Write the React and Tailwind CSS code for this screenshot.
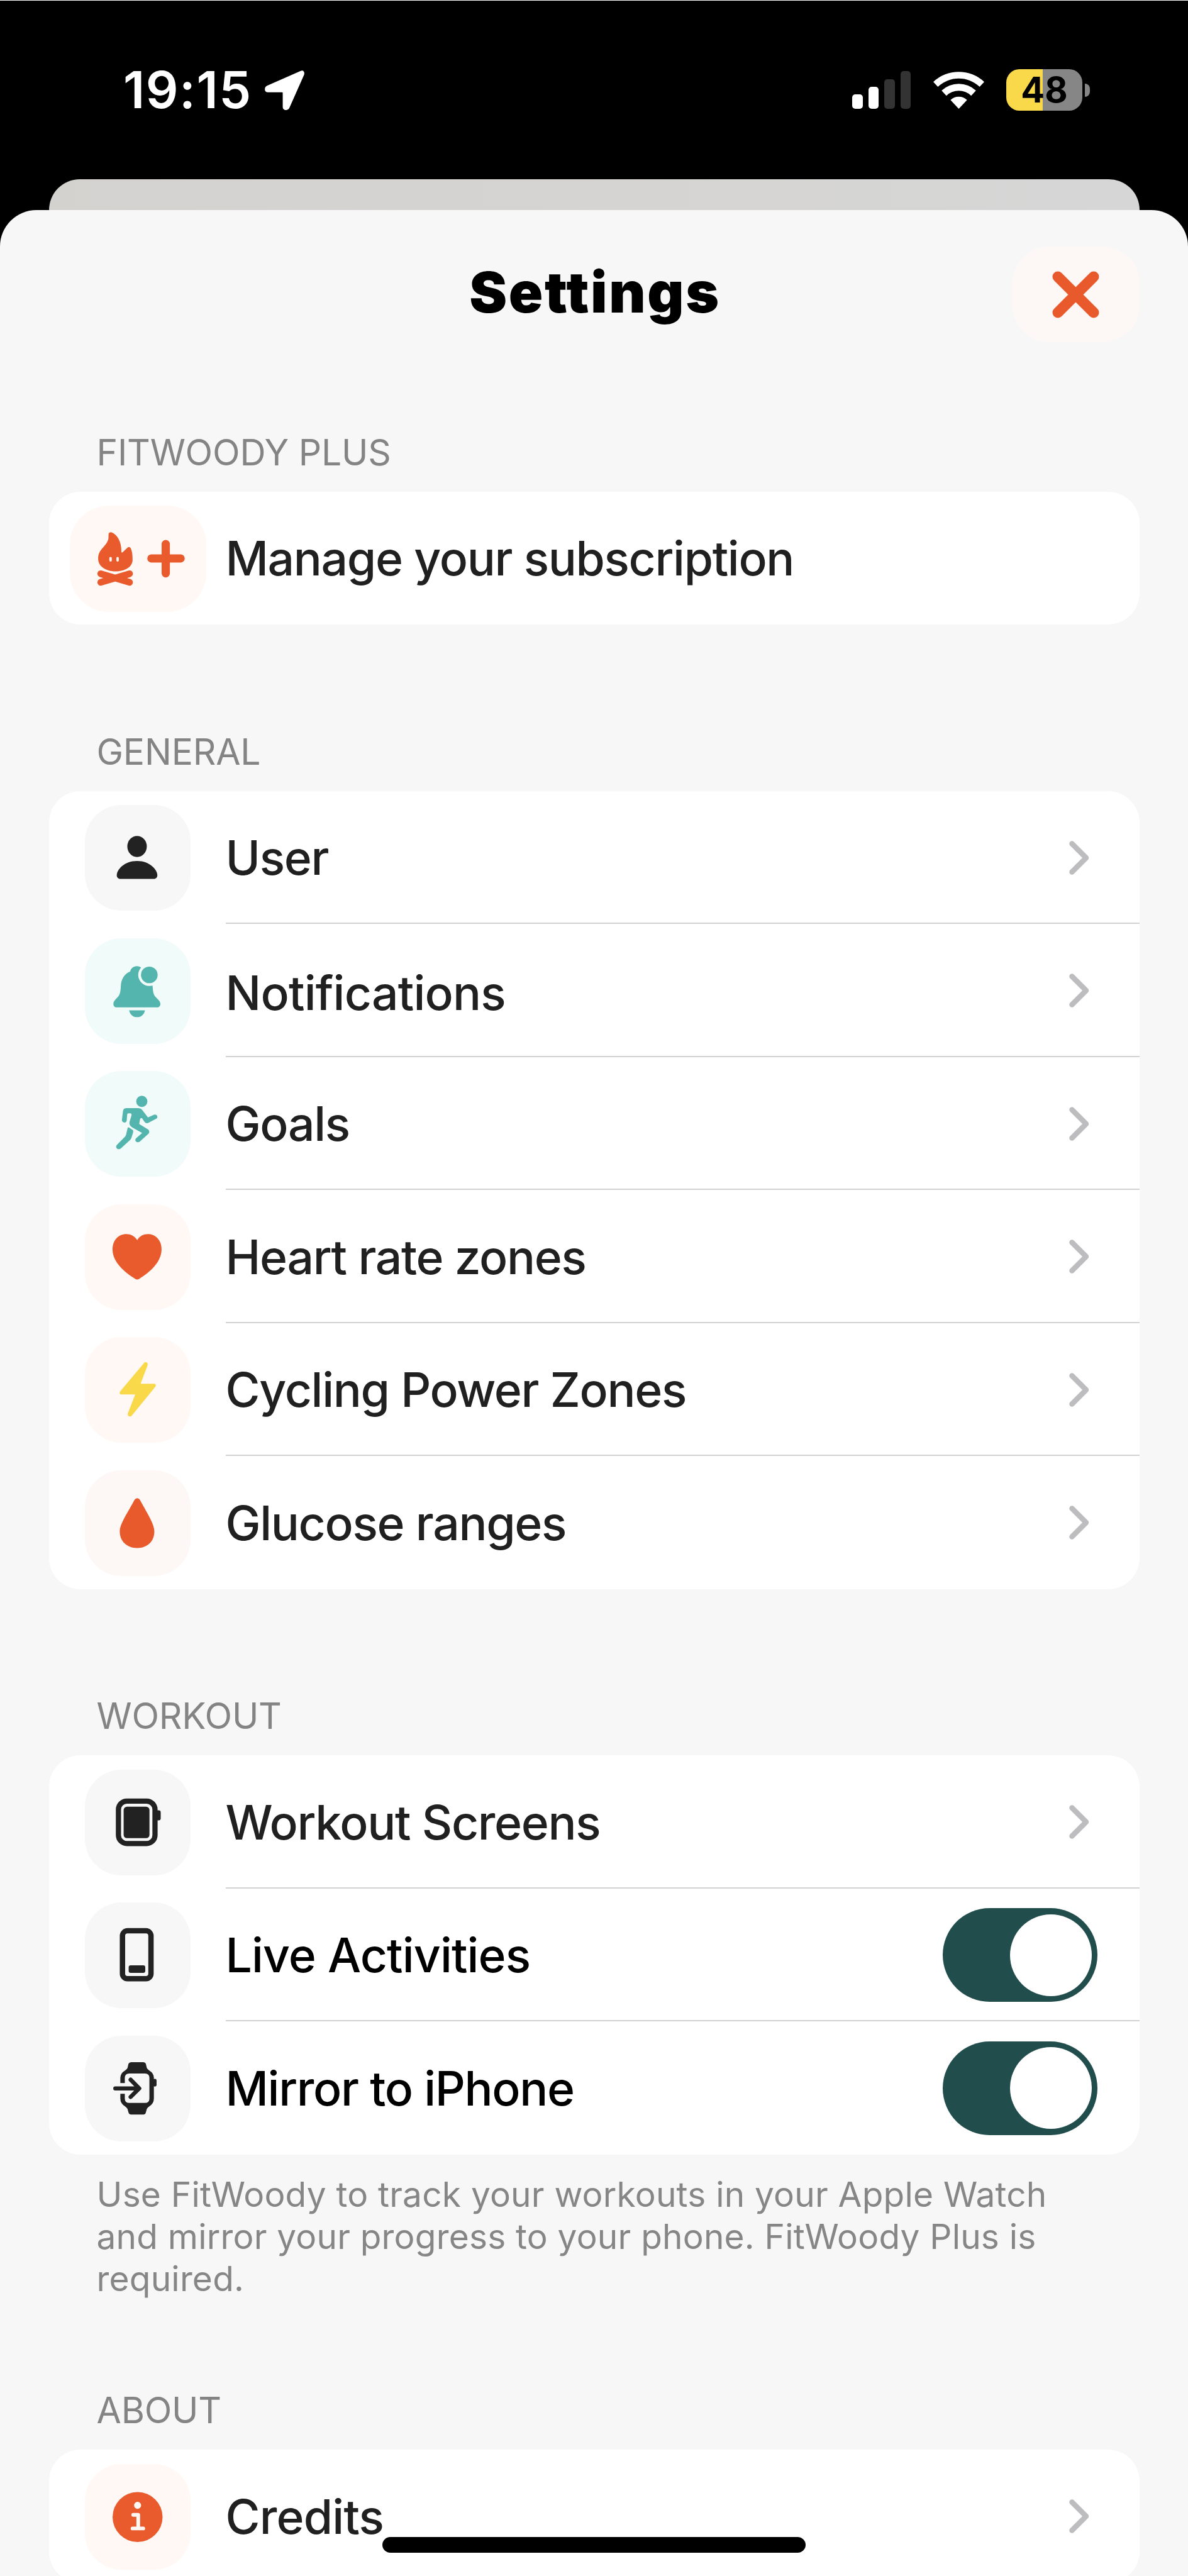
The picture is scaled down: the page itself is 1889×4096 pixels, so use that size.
import { clsx } from "clsx";

// Icon drawings, all on the same 315x315 tile
const ICONS = {
    user: (
        <g fill="#222222">
            <ellipse cx="155.5" cy="123.7" rx="29" ry="31.5" />
            <path d="M107 220.5h97c8 0 12-5 12-11 0-16-22-42.5-60.5-42.5S95 193 95 209.5c0 6 4 11 12 11z" />
        </g>
    ),
    bell: (
        <g fill="#53b5ad">
            <path d="M155 83c-11 0-18 7-20 16-17 7-27 22-28 45-1 18-3 24-8 30-7 8-14 13-14 22 0 7 5 10 10 10h120c6 0 10-4 10-10 0-9-8-14-15-22-5-6-7-12-8-30-1-23-10-38-27-45-2-9-9-16-20-16z" />
            <path d="M132 214.5h47c-2 12-11 20.500-23.500 20.500s-21.500-8.500-23.500-20.500z" />
            <circle cx="192" cy="109" r="33" fill="#f1fbf9" />
            <circle cx="192" cy="109" r="24.800" />
        </g>
    ),
    run: (
        <g fill="#53b5ad" transform="translate(58 50.8) scale(.3333)">
            <circle cx="335" cy="119" r="50" />
            <path d="M195 180L300 180Q325 180 340 198L390 262L445 238C470 232 485 260 465 274L392 312C380 317 368 313 360 303L337 270Q322 262 318 285L312 322L390 370C405 380 405 400 393 410L318 478C295 498 262 472 285 448L338 402L250 352C228 340 220 322 226 300L244 240Q244 226 232 226H215Q205 226 204 240L200 290C196 318 155 312 157 285L167 205Q170 182 195 180Z" />
            <path d="M208 358Q214 346 226 356L252 374Q262 382 258 395L244 440Q240 455 228 466L148 540C122 560 92 532 112 508L184 436Q192 428 195 415Z" />
        </g>
    ),
    heart: (
        <path
            fill="#e95b2d"
            d="M156 107C148 94 136 88.7 124 88.7C99 88.7 82.4 108 82.4 134C82.4 172 118 202 150 222Q156 226 162 222C194 202 228.5 172 228.5 134C228.5 108 212 88.7 188 88.7C175 88.7 163 94 156 107Z"
        />
    ),
    bolt: (
        <path
            fill="#f9d849"
            d="M176 78C180 72 189 76 187 84L166 139H206C211 139 213 143 210 148L140 234C135 240 126 236 128 228L150 171H109C104 171 102 167 105 162Z"
        />
    ),
    drop: (
        <path
            fill="#e8592c"
            d="M156 83C161 83 164 87 168 95C187 130 207 160 207 182C207 212 186 231.6 156 231.6C126 231.6 104 212 104 182C104 160 125 130 144 95C148 87 151 83 156 83Z"
        />
    ),
    screens: (
        <g fill="#222222">
            <rect x="100" y="93.500" width="109" height="126.500" rx="25" fill="none" stroke="#222222" strokeWidth="15.500" />
            <rect x="115.500" y="110" width="77" height="94" rx="10" />
            <rect x="212" y="121" width="14" height="30" rx="6" />
        </g>
    ),
    phone: (
        <g fill="#222222">
            <rect x="112" y="84.500" width="85" height="143" rx="15" fill="none" stroke="#222222" strokeWidth="16" />
            <rect x="130.500" y="187.500" width="49.500" height="22.500" rx="6" />
        </g>
    ),
    mirror: (
        <g fill="#222222" transform="translate(58 50.3) scale(.3333)">
            <path
                fillRule="evenodd"
                d="M240 85H350Q366 85 371 100L380 138Q386 150 402 160Q443 185 443 225V410Q443 455 402 480Q386 490 380 503L371 535Q366 553 350 553H240Q222 553 216 535L207 503Q200 490 185 480Q143 455 143 410V225Q143 185 185 160Q202 150 207 138L216 100Q222 85 240 85ZM223 187H363Q403 187 403 227V410Q403 450 363 450H223Q183 450 183 410V227Q183 187 223 187Z"
            />
            <rect x="135" y="272" width="55" height="96" fill="#f7f7f7" />
            <rect x="436" y="235" width="31" height="68" rx="14" />
            <path d="M98 320H300M235 242L312 320L235 396" fill="none" stroke="#222222" strokeWidth="37" strokeLinecap="round" strokeLinejoin="round" />
        </g>
    ),
    info: (
        <g>
            <circle cx="157" cy="158" r="74.500" fill="#e95b2d" />
            <circle cx="157" cy="123" r="10.500" fill="#fff8f4" />
            <path d="M144 151.500H159V191M142 192H174" fill="none" stroke="#fff8f4" strokeWidth="11" strokeLinecap="round" strokeLinejoin="round" />
        </g>
    ),
};

const SECTIONS = [
    {
        title: "GENERAL",
        rows: [
            { icon: "user", tile: "bg-[#f7f7f7]", label: "User" },
            { icon: "bell", tile: "bg-[#f1fbf9]", label: "Notifications", text: "pt-[7px] tracking-[-0.8px]" },
            { icon: "run", tile: "bg-[#f1fbf9]", label: "Goals" },
            { icon: "heart", tile: "bg-[#fff8f4]", label: "Heart rate zones" },
            { icon: "bolt", tile: "bg-[#fff8f4]", label: "Cycling Power Zones" },
            { icon: "drop", tile: "bg-[#fdf8f5]", label: "Glucose ranges" },
        ],
    },
    {
        title: "WORKOUT",
        note: [
            "Use FitWoody to track your workouts in your Apple Watch",
            "and mirror your progress to your phone. FitWoody Plus is",
            "required.",
        ],
        rows: [
            { icon: "screens", tile: "bg-[#f7f7f7]", label: "Workout Screens" },
            { icon: "phone", tile: "bg-[#f7f7f7]", label: "Live Activities", text: "tracking-[-0.9px]", toggle: true },
            { icon: "mirror", tile: "bg-[#f7f7f7]", label: "Mirror to iPhone", toggle: true },
        ],
    },
    {
        title: "ABOUT",
        rows: [{ icon: "info", tile: "bg-[#fff8f4]", label: "Credits", text: "tracking-[-0.8px]" }],
    },
];

function StatusBar() {
    return (
        <div className="flex h-[285px] items-center justify-between border-t border-white pl-[196px] pr-[156px]">
            <div className="flex items-center gap-[20px]">
                <span className="text-[81px] leading-none font-semibold tracking-[1.5px] text-white">19:15</span>
                <svg className="h-[63px] w-[63px]" viewBox="0 0 118 118" fill="#ffffff">
                    <path d="M106 2C114-3 120 4 117 13L74 110C70 121 54 121 53.500 109V66Q53.500 65 51 65H8C-2 65-2 50 6 46Z" />
                </svg>
            </div>
            <div className="flex items-center">
                <div className="flex h-[60px] items-end gap-[9px]">
                    <div className="h-[23px] w-[16.500px] rounded-[5px] bg-white" />
                    <div className="h-[35px] w-[16.500px] rounded-[5px] bg-white" />
                    <div className="h-[47px] w-[16.500px] rounded-[5px] bg-[#333333]" />
                    <div className="h-[60px] w-[16.500px] rounded-[5px] bg-[#333333]" />
                </div>
                <svg className="ml-[36px] h-[60px] w-[81px]" viewBox="-76.500 -113 153 113" fill="#ffffff">
                    <path d="M-76.400-80.500A111 111 0 0 1 76.400-80.500L62.600-66A91 91 0 0 0-62.600-66Z" />
                    <path d="M-51.600-54.400A75 75 0 0 1 51.600-54.400L37.200-39.200A54 54 0 0 0-37.200-39.200Z" />
                    <path d="M-24.800-26.100A36 36 0 0 1 24.800-26.100L0 0Z" />
                </svg>
                <div className="ml-[35px] flex h-[66px] w-[121px] items-center justify-center rounded-[21px] bg-linear-to-r from-[#f9d849] from-48% to-[#868686] to-48%">
                    <span className="text-[56px] leading-none font-bold text-black">48</span>
                </div>
                <div className="ml-[4px] h-[21px] w-[8px] rounded-r-full bg-[#868686]" />
            </div>
        </div>
    );
}

function Chevron() {
    return (
        <svg className="mr-[80px] h-[54px] w-[32px]" viewBox="0 0 32 54" fill="none" stroke="#bdbdbf" strokeWidth="8.500" strokeLinecap="round" strokeLinejoin="round">
            <path d="M4.500 4.500L27 27L4.500 49.500" />
        </svg>
    );
}

function Toggle() {
    return (
        <div className="mr-[67px] flex h-[149px] w-[246px] items-center justify-end rounded-full bg-[#214e4c] pr-[9px]">
            <div className="h-[130px] w-[130px] rounded-full bg-white" />
        </div>
    );
}

function SectionTitle({ children }) {
    return <h2 className="mb-[26px] pl-[76px] text-[57px] leading-[73px] tracking-[-0.2px] text-[#848484]">{children}</h2>;
}

function Row({ row, last }) {
    return (
        <div className="flex h-[211.500px] items-center pl-[57px]">
            <div className={clsx("mt-[2px] h-[168px] w-[168px] shrink-0 rounded-[58px]", row.tile)}>
                <svg className="h-full w-full" viewBox="0 0 315 315">
                    {ICONS[row.icon]}
                </svg>
            </div>
            <div className={clsx("ml-[56px] flex h-full flex-1 items-center justify-between border-b-2 pt-[3px]", last ? "border-transparent" : "border-[#d2d2d2]")}>
                <span className={clsx("text-[75px] leading-none font-medium", row.toggle ? "text-black" : "text-[#202020]", row.text ?? "tracking-[-1.35px]")}>
                    {row.label}
                </span>
                {row.toggle ? <Toggle /> : <Chevron />}
            </div>
        </div>
    );
}

function PlusCard() {
    return (
        <div className="flex h-[211.500px] items-center rounded-[50px] bg-white pl-[33px]">
            <div className="mt-[2px] h-[169px] w-[217px] rounded-[62px] bg-[#fff8f4]">
                <svg className="h-full w-full" viewBox="18 45 1222 950">
                    <path
                        fill="#e95b2d"
                        d="M365 300Q366 283 388 282C440 300 482 360 480 462Q484 466 490 462L535 420Q550 408 563 424C575 450 581 480 580 535C575 595 510 632 427 632C340 632 274 585 272 525C270 480 285 452 315 420C345 385 362 360 364 335Z"
                    />
                    <rect x="372" y="503" width="22" height="42" rx="11" fill="#fff8f4" />
                    <rect x="435" y="503" width="22" height="42" rx="11" fill="#fff8f4" />
                    <path d="M295 654L553 731M295 731L553 654" stroke="#e95b2d" strokeWidth="60" strokeLinecap="round" />
                    <path d="M877 388V650M749 517H1010" stroke="#e95b2d" strokeWidth="74" strokeLinecap="round" />
                </svg>
            </div>
            <span className="ml-[31px] text-[75px] leading-none font-medium tracking-[-1.35px] text-[#202020]">Manage your subscription</span>
        </div>
    );
}

export default function App() {
    return (
        <div className="relative h-[4096px] w-[1889px] overflow-hidden bg-black font-['Inter',sans-serif]">
            <StatusBar />
            {/* Sheet underneath */}
            <div className="mx-[77.500px] h-[49px] rounded-t-[50px] bg-linear-to-r from-[#d4d2cf] to-[#d6d6d6]" />

            <div className="h-[3800px] rounded-t-[58px] bg-[#f7f7f7] px-[77.500px] pt-[58px]">
                <header className="flex h-[152px] items-center justify-between">
                    <div className="w-[202px]" />
                    <h1 className="pb-[7px] pl-[3px] text-[90px] leading-none font-black tracking-[2.600px] text-black">Settings</h1>
                    <button className="flex h-[152px] w-[202px] items-center justify-center rounded-[58px] bg-[#fdf8f5]">
                        <svg className="h-[75px] w-[75px]" viewBox="0 0 75 75" stroke="#e8592c" strokeWidth="17" strokeLinecap="round">
                            <path d="M9 9L66 66M66 9L9 66" />
                        </svg>
                    </button>
                </header>

                <section className="mt-[138.500px]">
                    <SectionTitle>FITWOODY PLUS</SectionTitle>
                    <PlusCard />
                </section>

                {SECTIONS.map((section, i) => (
                    <section key={section.title} className={i === 2 ? "mt-[139.500px]" : "mt-[165.500px]"}>
                        <SectionTitle>{section.title}</SectionTitle>
                        <div className="rounded-[50px] bg-white">
                            {section.rows.map((row, j) => (
                                <Row key={row.label} row={row} last={j === section.rows.length - 1} />
                            ))}
                        </div>
                        {section.note && (
                            <p className="mt-[30px] pl-[76px] text-[55px] leading-[67px] tracking-[0.2px] whitespace-nowrap text-[#868686]">
                                {section.note.map((line) => (
                                    <span key={line} className="block">{line}</span>
                                ))}
                            </p>
                        )}
                    </section>
                ))}
            </div>

            {/* Home indicator */}
            <div className="absolute bottom-[37px] left-[608px] h-[25px] w-[673px] rounded-full bg-black" />
        </div>
    );
}
